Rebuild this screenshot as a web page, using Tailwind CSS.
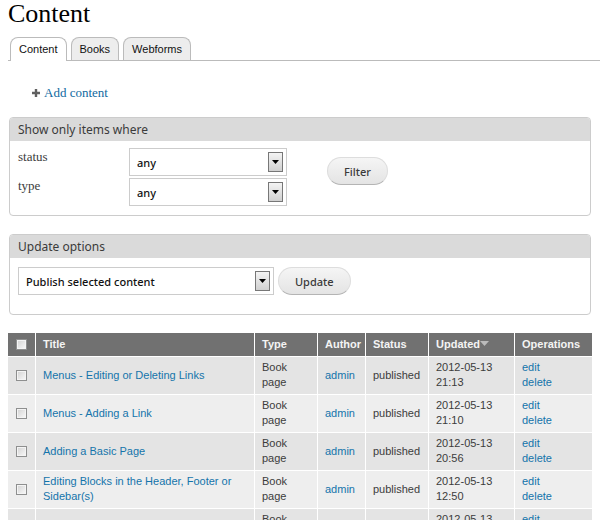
<!DOCTYPE html>
<html lang="en">
<head>
<meta charset="utf-8">
<title>Content</title>
<script src="https://cdn.jsdelivr.net/npm/@tailwindcss/browser@4"></script>
</head>
<body class="h-screen overflow-hidden bg-white font-['Liberation_Sans',Arial,sans-serif] text-[11px] leading-[15px] text-[#3c3c3c]">
<header class="pl-2">
  <h1 class="font-['Liberation_Serif',Georgia,serif] text-[26px] leading-7 text-black">Content</h1>
  <nav class="mt-[9px] flex h-6 gap-1 border-b border-[#bbb] pl-0.5" aria-label="Sections">
    <a href="#" aria-current="page" class="-mb-px rounded-t-lg border border-b-0 border-[#bbb] bg-white px-2 pt-1 text-[#111]">Content</a>
    <a href="#" class="rounded-t-lg border border-b-0 border-[#bbb] bg-[#ededed] px-2 pt-1 text-[#111]">Books</a>
    <a href="#" class="rounded-t-lg border border-b-0 border-[#bbb] bg-[#ededed] px-2 pt-1 text-[#111]">Webforms</a>
  </nav>
</header>
<main class="px-2">
  <a href="#" class="mt-6 ml-6 inline-flex items-center gap-1 align-top font-['Liberation_Serif',Georgia,serif] text-[13px] leading-4 text-[#0f6a9f]">
    <svg class="size-2" viewBox="0 0 8 8" aria-hidden="true"><path d="M2.800 0h2.400v2.800H8v2.400H5.200V8H2.800V5.200H0V2.800h2.800z" fill="#606060"/></svg>
    Add content
  </a>

  <form class="mt-4 mr-px ml-px">
    <section class="overflow-hidden rounded-[4px] border border-[#ccc] font-['Noto_Sans','Open_Sans',sans-serif]">
      <h2 class="bg-[#dadada] px-2 text-[12px] leading-[23px] text-[#3b3b3b]">Show only items where</h2>
      <div class="flex gap-10 px-2 pt-[7px] pb-[9px]">
        <div class="flex flex-col gap-0.5 font-['Liberation_Serif',Georgia,serif] text-[13px]">
          <div class="flex">
            <label for="status" class="w-[111px] pt-px leading-4">status</label>
            <div class="relative w-[158px]">
              <select id="status" class="block h-7 w-full appearance-none border border-[#ccc] bg-white px-[7px] font-['Noto_Sans',sans-serif] text-[11px] font-medium text-[#111]"><option>any</option></select>
              <span class="pointer-events-none absolute top-1 right-1 flex h-5 w-[15px] items-center justify-center border border-[#777] bg-linear-to-b from-[#f4f4f4] to-[#d0d0d0]"><svg class="h-1 w-[7px]" viewBox="0 0 7 4"><path d="M0 0h7L3.500 4z" fill="#000"/></svg></span>
            </div>
          </div>
          <div class="flex">
            <label for="type" class="w-[111px] leading-4">type</label>
            <div class="relative w-[158px]">
              <select id="type" class="block h-7 w-full appearance-none border border-[#ccc] bg-white px-[7px] font-['Noto_Sans',sans-serif] text-[11px] font-medium text-[#111]"><option>any</option></select>
              <span class="pointer-events-none absolute top-1 right-1 flex h-5 w-[15px] items-center justify-center border border-[#777] bg-linear-to-b from-[#f4f4f4] to-[#d0d0d0]"><svg class="h-1 w-[7px]" viewBox="0 0 7 4"><path d="M0 0h7L3.500 4z" fill="#000"/></svg></span>
            </div>
          </div>
        </div>
        <button type="button" class="mt-[9px] h-7 self-start rounded-full border border-[#ddd] border-b-[#b4b4b4] bg-linear-to-b from-[#f5f5f5] to-[#e4e4e4] px-4 text-[11px] font-medium text-[#3a3a3a]">Filter</button>
      </div>
    </section>

    <section class="mt-[18px] overflow-hidden rounded-[4px] border border-[#ccc] font-['Noto_Sans','Open_Sans',sans-serif]">
      <h2 class="bg-[#dadada] px-2 text-[12px] leading-[23px] text-[#3b3b3b]"><label for="operation">Update options</label></h2>
      <div class="flex gap-1 px-2 pt-[9px] pb-[19px]">
        <div class="relative w-64">
          <select id="operation" class="block h-7 w-full appearance-none border border-[#ccc] bg-white px-[7px] font-['Noto_Sans',sans-serif] text-[11px] font-medium text-[#111]"><option>Publish selected content</option></select>
          <span class="pointer-events-none absolute top-1 right-1 flex h-5 w-[15px] items-center justify-center border border-[#777] bg-linear-to-b from-[#f4f4f4] to-[#d0d0d0]"><svg class="h-1 w-[7px]" viewBox="0 0 7 4"><path d="M0 0h7L3.500 4z" fill="#000"/></svg></span>
        </div>
        <button type="button" class="h-7 rounded-full border border-[#ddd] border-b-[#b4b4b4] bg-linear-to-b from-[#f5f5f5] to-[#e4e4e4] px-4 text-[11px] font-medium text-[#3a3a3a]">Update</button>
      </div>
    </section>
  </form>

  <table class="mt-[18px] w-full table-fixed border-separate border-spacing-0 [&_a]:text-[#1474ab] [&_td]:h-[38px] [&_td]:border-b [&_td]:border-white [&_td]:px-[7px] [&_td]:pt-0 [&_td]:pb-px [&_td:not(:last-child)]:border-r [&_th]:h-6 [&_th]:border-b [&_th]:border-white [&_th]:px-[7px] [&_th]:pt-0 [&_th]:pb-px [&_th]:text-left [&_th:not(:last-child)]:border-r [&_input]:ml-px [&_input]:block [&_input]:size-[11px] [&_input]:appearance-none [&_input]:border [&_input]:border-[#8e8f8f] [&_input]:bg-linear-to-br [&_input]:from-[#d2d2d2] [&_input]:to-[#fafafa] [&_input]:shadow-[inset_0_0_0_1px_#f4f4f4]">
    <colgroup><col class="w-7"><col><col class="w-[63px]"><col class="w-12"><col class="w-[63px]"><col class="w-[86px]"><col class="w-[77px]"></colgroup>
    <thead class="bg-[#717171] text-[#f4f4f4]">
      <tr><th><input type="checkbox" aria-label="Select all rows"></th><th>Title</th><th>Type</th><th>Author</th><th>Status</th><th class="whitespace-nowrap">Updated<svg class="inline-block h-[5px] w-[9px] align-[2px]" viewBox="0 0 9 5" aria-hidden="true"><path d="M0 0h9L4.500 5z" fill="#bbb"/></svg></th><th>Operations</th></tr>
    </thead>
    <tbody>
      <tr class="bg-[#e4e4e4]"><td><input type="checkbox" aria-label="Select Menus - Editing or Deleting Links"></td><td><a href="#">Menus - Editing or Deleting Links</a></td><td>Book<br>page</td><td><a href="#">admin</a></td><td>published</td><td>2012-05-13<br>21:13</td><td><a href="#">edit</a><br><a href="#">delete</a></td></tr>
      <tr class="bg-[#eeeeee]"><td><input type="checkbox" aria-label="Select Menus - Adding a Link"></td><td><a href="#">Menus - Adding a Link</a></td><td>Book<br>page</td><td><a href="#">admin</a></td><td>published</td><td>2012-05-13<br>21:10</td><td><a href="#">edit</a><br><a href="#">delete</a></td></tr>
      <tr class="bg-[#e4e4e4]"><td><input type="checkbox" aria-label="Select Adding a Basic Page"></td><td><a href="#">Adding a Basic Page</a></td><td>Book<br>page</td><td><a href="#">admin</a></td><td>published</td><td>2012-05-13<br>20:56</td><td><a href="#">edit</a><br><a href="#">delete</a></td></tr>
      <tr class="bg-[#eeeeee]"><td><input type="checkbox" aria-label="Select Editing Blocks in the Header, Footer or Sidebar(s)"></td><td><a href="#">Editing Blocks in the Header, Footer or Sidebar(s)</a></td><td>Book<br>page</td><td><a href="#">admin</a></td><td>published</td><td>2012-05-13<br>12:50</td><td><a href="#">edit</a><br><a href="#">delete</a></td></tr>
      <tr class="bg-[#e4e4e4] [&>td]:align-top [&>td]:pt-[3px]"><td></td><td></td><td>Book</td><td></td><td></td><td>2012-05-13</td><td><a href="#">edit</a></td></tr>
    </tbody>
  </table>
</main>
</body>
</html>
